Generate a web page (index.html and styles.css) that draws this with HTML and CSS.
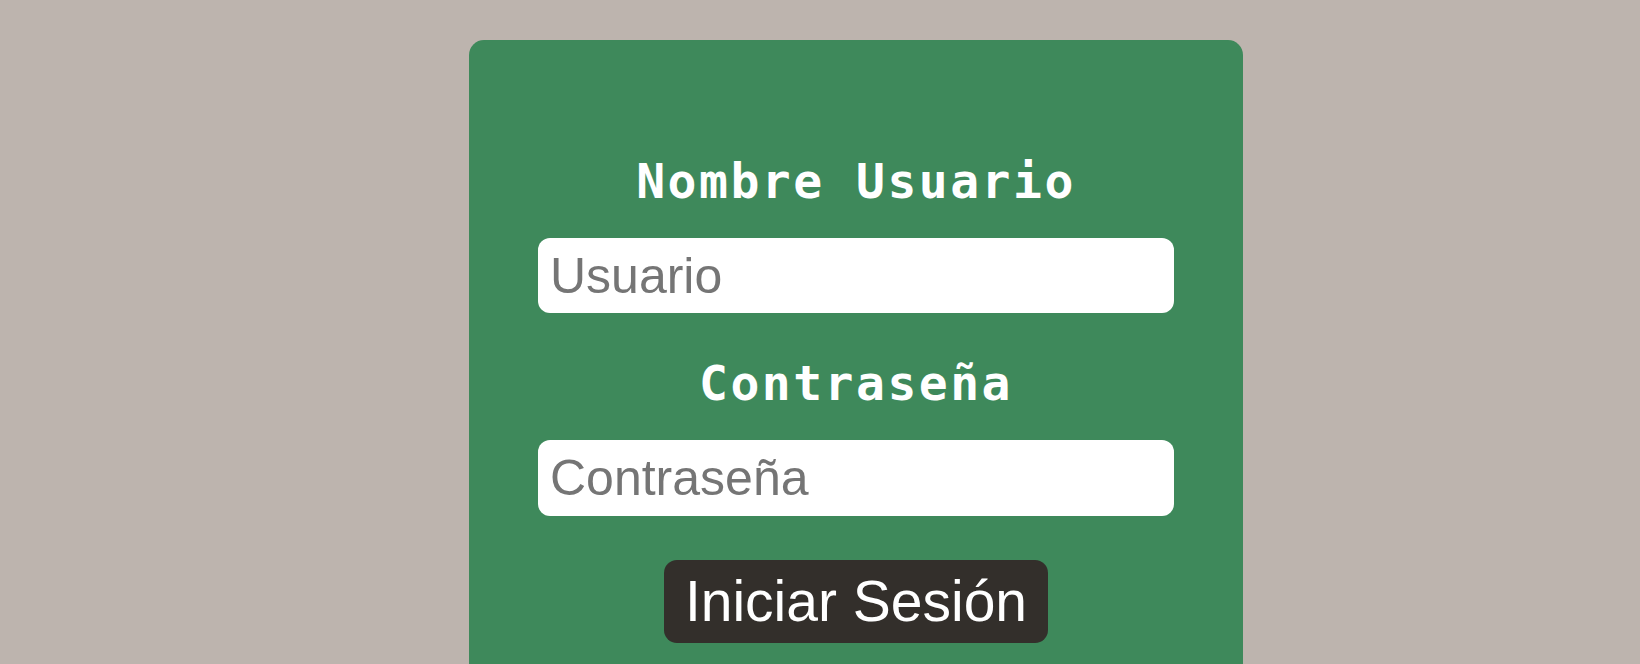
FILE: index.html
```html
<!DOCTYPE html>
<html lang="es">
<head>
<meta charset="utf-8">
<title>Iniciar Sesión</title>
<link rel="stylesheet" href="styles.css">
</head>
<body>
<main class="page">
  <form class="card">
    <label class="label" for="user">Nombre Usuario</label>
    <input class="field" id="user" type="text" placeholder="Usuario">
    <label class="label" for="pass">Contraseña</label>
    <input class="field field-last" id="pass" type="password" placeholder="Contraseña">
    <div class="actions">
      <button class="btn" type="button">Iniciar Sesión</button>
    </div>
  </form>
</main>
</body>
</html>
```

FILE: styles.css
```css
html, body {
  margin: 0;
  padding: 0;
  background: #bdb4ae;
  height: 100%;
  overflow: hidden;
}

.page {
  display: flex;
  padding: 40px 0 0 469px;
}

.card {
  width: 774px;
  box-sizing: border-box;
  min-height: 700px;
  background: #3e895b;
  border-radius: 15px;
  padding: 113px 69px 0;
  display: flex;
  flex-direction: column;
  align-items: stretch;
}

.label {
  display: block;
  text-align: center;
  font-family: "DejaVu Sans Mono", monospace;
  font-weight: bold;
  font-size: 48px;
  line-height: 56px;
  letter-spacing: 2.5px;
  color: #ffffff;
  margin: 0 0 29px;
}

.field {
  display: block;
  width: 100%;
  box-sizing: border-box;
  height: 75px;
  border: none;
  outline: none;
  border-radius: 12px;
  background: #ffffff;
  padding: 0 12px;
  font-family: "Liberation Sans", Arial, sans-serif;
  font-size: 50px;
  color: #333;
  margin: 0 0 42px;
}

.field::placeholder {
  color: #757575;
}

.field-last {
  height: 76px;
  margin-bottom: 44px;
}

.actions {
  display: flex;
  justify-content: center;
}

.btn {
  height: 83px;
  padding: 0 21px;
  border: none;
  border-radius: 13px;
  background: #332f2b;
  color: #ffffff;
  font-family: "Liberation Sans", Arial, sans-serif;
  font-size: 57px;
  line-height: 1;
  cursor: pointer;
}
```
